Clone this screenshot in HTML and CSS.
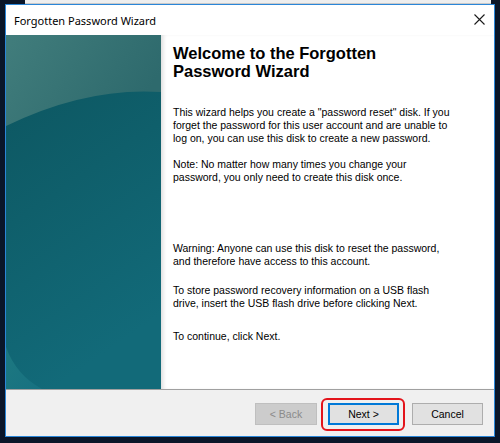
FILE: index.html
```html
<!DOCTYPE html>
<html>
<head>
<meta charset="utf-8">
<title>Forgotten Password Wizard</title>
<link rel="stylesheet" href="styles.css">
</head>
<body>
<div class="desktop">
  <div class="backwin"></div>
  <div class="dialog">
    <div class="titlebar">
      <span class="title">Forgotten Password Wizard</span>
      <svg class="close" width="11" height="11" viewBox="0 0 11 11"><path d="M0.5 0.5 L10.5 10.5 M10.5 0.5 L0.5 10.5" stroke="#1a1a1a" stroke-width="1.1" fill="none"/></svg>
    </div>
    <div class="main">
      <div class="banner">
        <svg width="155" height="354" viewBox="0 0 155 354">
          <defs>
            <linearGradient id="base" x1="0" y1="0" x2="0.3" y2="1">
              <stop offset="0" stop-color="#0c545e"/>
              <stop offset="0.5" stop-color="#0f5f6b"/>
              <stop offset="1" stop-color="#126a79"/>
            </linearGradient>
            <linearGradient id="top" x1="0" y1="0" x2="1" y2="0.4">
              <stop offset="0" stop-color="#417d7c"/>
              <stop offset="1" stop-color="#2e6a6d"/>
            </linearGradient>
            <linearGradient id="corner" x1="0" y1="0" x2="1" y2="1">
              <stop offset="0" stop-color="#1d7880"/>
              <stop offset="1" stop-color="#177181"/>
            </linearGradient>
          </defs>
          <rect width="155" height="354" fill="url(#base)"/>
          <path d="M0 0 H155 V57 Q80 52 0 91 Z" fill="url(#top)"/>
          <path d="M0 312 Q10 340 36 354 H0 Z" fill="url(#corner)"/>
        </svg>
      </div>
      <div class="content">
        <h1 class="heading">Welcome to the Forgotten<br>Password Wizard</h1>
        <p class="para p1">This wizard helps you create a "password reset" disk. If you<br>forget the password for this user account and are unable to<br>log on, you can use this disk to create a new password.</p>
        <p class="para p2">Note: No matter how many times you change your<br>password, you only need to create this disk once.</p>
        <p class="para p3">Warning: Anyone can use this disk to reset the password,<br>and therefore have access to this account.</p>
        <p class="para p4">To store password recovery information on a USB flash<br>drive, insert the USB flash drive before clicking Next.</p>
        <p class="para p5">To continue, click Next.</p>
      </div>
    </div>
    <div class="footer">
      <button class="btn btn-back" disabled>&lt; Back</button>
      <button class="btn btn-next">Next &gt;</button>
      <button class="btn btn-cancel">Cancel</button>
      <div class="highlight"></div>
    </div>
  </div>
</div>
</body>
</html>
```
FILE: styles.css
```css
* { box-sizing: border-box; }
html, body { margin: 0; padding: 0; }
body {
  width: 500px;
  height: 443px;
  overflow: hidden;
  background: #0a1629;
  font-family: "Liberation Sans", Arial, sans-serif;
}
.desktop {
  position: relative;
  width: 500px;
  height: 443px;
  background: #0a1629;
}
.backwin {
  position: absolute;
  left: 25px;
  top: 0;
  width: 466px;
  height: 4px;
  background: #eeeeee;
  border-bottom: 1px solid #c9c9c9;
}
.dialog {
  position: absolute;
  left: 5px;
  top: 4px;
  width: 490px;
  height: 433px;
  border: 1px solid #2a86d8;
  background: #f0f0f0;
  display: flex;
  flex-direction: column;
}
.titlebar {
  height: 30px;
  background: #ffffff;
  display: flex;
  align-items: center;
  justify-content: space-between;
  padding: 0 9px 0 8px;
}
.title {
  font-family: "Noto Sans", "Open Sans", sans-serif;
  font-size: 11px;
  color: #000;
  white-space: nowrap;
  margin-top: 1px;
}
.close { display: block; margin-top: -1px; }
.main {
  height: 354px;
  display: flex;
}
.banner {
  width: 155px;
  height: 354px;
  flex: none;
}
.banner svg { display: block; }
.content {
  flex: 1;
  background: #ffffff;
  box-shadow: inset 4px 0 4px -2px rgba(0, 0, 0, 0.14);
  padding: 9px 0 0 12px;
  color: #000;
}
.heading {
  margin: 0;
  font-size: 16.5px;
  line-height: 18px;
  font-weight: bold;
  white-space: nowrap;
}
.para {
  margin: 0;
  font-size: 10.5px;
  line-height: 13px;
  white-space: nowrap;
}
.p1 { margin-top: 26px; }
.p2 { margin-top: 13px; }
.p3 { margin-top: 58px; }
.p4 { margin-top: 16px; }
.p5 { margin-top: 20px; }
.footer {
  position: relative;
  height: 47px;
  border-top: 1px solid #a0a0a0;
  display: flex;
  align-items: flex-start;
  justify-content: flex-end;
  padding: 13px 11px 0 0;
}
.btn {
  height: 22px;
  width: 71px;
  margin: 0;
  padding: 0;
  font-family: "Liberation Sans", Arial, sans-serif;
  font-size: 10.5px;
  color: #000;
  background: #e1e1e1;
  border: 1px solid #adadad;
  border-radius: 0;
}
.btn-back {
  width: 62px;
  background: #cccccc;
  border-color: #bfbfbf;
  color: #8a8a8a;
}
.btn-next {
  margin-left: 11px;
  border-color: #0078d7;
  box-shadow: inset 0 0 0 1px #0078d7;
}
.btn-cancel { margin-left: 13px; }
.highlight {
  position: absolute;
  left: 315px;
  top: 8px;
  width: 84px;
  height: 33px;
  border: 2px solid #e3141b;
  border-radius: 6px;
}
```
